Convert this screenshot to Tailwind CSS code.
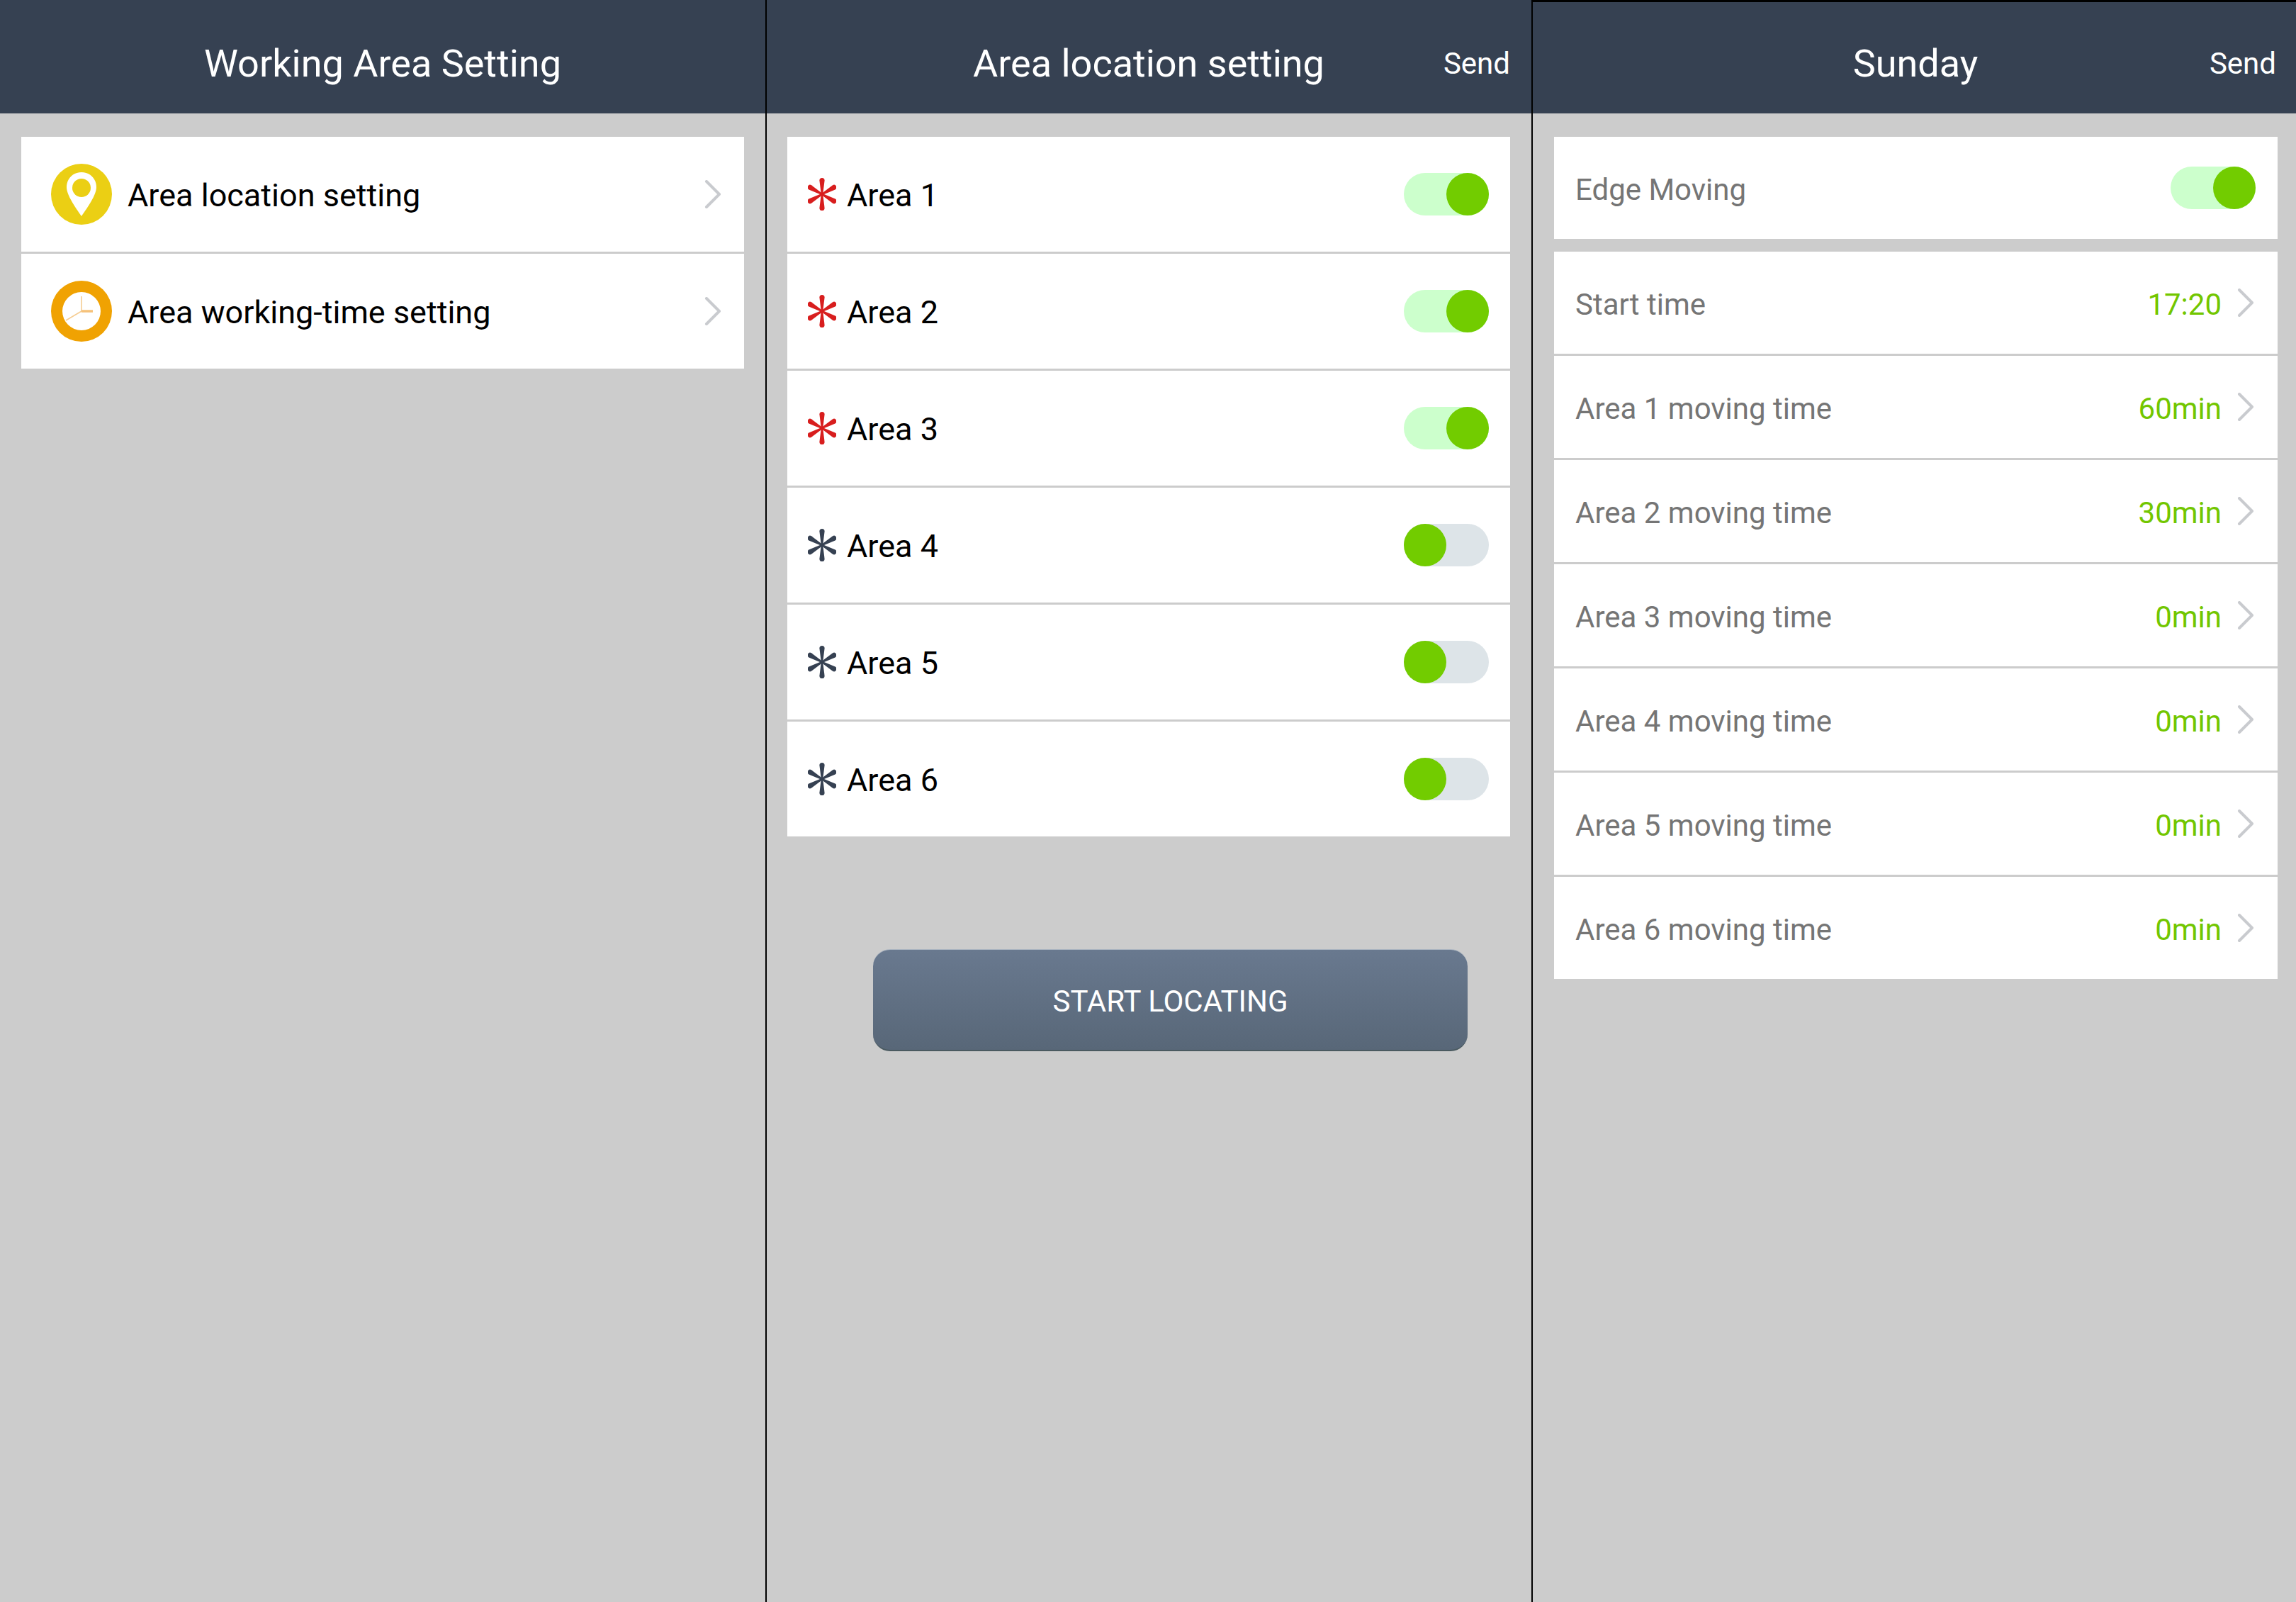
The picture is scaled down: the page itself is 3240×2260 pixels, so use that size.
<!DOCTYPE html>
<html lang="en">
<head>
  <meta charset="UTF-8" />
  <title>Working Area Setting</title>
  <script src="https://cdn.jsdelivr.net/npm/@tailwindcss/browser@4"></script>
</head>
<body class="bg-[#cccccc] font-['Roboto',sans-serif] overflow-hidden">
  <svg class="hidden">
    <symbol id="chev" viewBox="0 0 24 40"><path d="M3 2 L21 20 L3 38" fill="none" stroke="#c9cbcf" stroke-width="4" stroke-linecap="round" stroke-linejoin="round"/></symbol>
    <symbol id="star" viewBox="-20 -24 40 48">
      <g fill="currentColor">
        <path d="M-1.2 0 L-3.6 -19.4 A3.6 3.6 0 0 1 3.6 -19.4 L1.2 0 Z"/>
        <path d="M-1.2 0 L-3.6 -19.4 A3.6 3.6 0 0 1 3.6 -19.4 L1.2 0 Z" transform="rotate(60)"/>
        <path d="M-1.2 0 L-3.6 -19.4 A3.6 3.6 0 0 1 3.6 -19.4 L1.2 0 Z" transform="rotate(120)"/>
        <path d="M-1.2 0 L-3.6 -19.4 A3.6 3.6 0 0 1 3.6 -19.4 L1.2 0 Z" transform="rotate(180)"/>
        <path d="M-1.2 0 L-3.6 -19.4 A3.6 3.6 0 0 1 3.6 -19.4 L1.2 0 Z" transform="rotate(240)"/>
        <path d="M-1.2 0 L-3.6 -19.4 A3.6 3.6 0 0 1 3.6 -19.4 L1.2 0 Z" transform="rotate(300)"/>
      </g>
    </symbol>
  </svg>

  <div class="flex w-[3240px] h-[2260px]">
    <!-- working area -->
    <div class="w-[1080px] shrink-0">
      <div class="h-[160px] bg-[#364152] text-white flex items-center justify-center pt-[20px] text-[54px] leading-none">Working Area Setting</div>
      <div class="mt-[33px] mx-[30px] flex flex-col gap-[3px]">
        <div class="h-[162px] bg-white flex items-center pl-[42px] pr-[32px] text-black text-[45px]">
          <svg class="w-[86px] h-[86px] shrink-0" viewBox="0 0 86 86"><circle cx="43" cy="43" r="43" fill="#ebcf14"/><path d="M43 12 C31 12 22 21 22 33 C22 44 34 61 43 74 C52 61 64 44 64 33 C64 21 55 12 43 12 Z" fill="#fff"/><circle cx="43" cy="34" r="13" fill="#ebcf14"/></svg>
          <span class="ml-[22px] pt-[4px]">Area location setting</span>
          <svg class="w-[24px] h-[40px] ml-auto"><use href="#chev"/></svg>
        </div>
        <div class="h-[162px] bg-white flex items-center pl-[42px] pr-[32px] text-black text-[45px]">
          <svg class="w-[86px] h-[86px] shrink-0" viewBox="0 0 86 86"><circle cx="43" cy="43" r="43" fill="#f0a202"/><circle cx="43" cy="43" r="27" fill="#fff"/><path d="M43 22 V43 M43 43 L21 56" stroke="#f6cd93" stroke-width="1.6" fill="none"/><path d="M43 43 H59" stroke="#f6c27a" stroke-width="3.5"/></svg>
          <span class="ml-[22px] pt-[4px]">Area working-time setting</span>
          <svg class="w-[24px] h-[40px] ml-auto"><use href="#chev"/></svg>
        </div>
      </div>
    </div>
    <div class="w-[2px] shrink-0 bg-black"></div>

    <!-- location -->
    <div class="w-[1079px] shrink-0">
      <div class="h-[160px] bg-[#364152] text-white flex items-center pt-[20px] pl-[29px] pr-[30px] relative">
        <span class="w-[1020px] text-center text-[54px] leading-none">Area location setting</span>
        <span class="absolute right-[30px] top-[69px] text-[42px] leading-none">Send</span>
      </div>
      <div class="mt-[33px] ml-[29px] mr-[30px] flex flex-col gap-[3px] text-black text-[45px]">
        <div class="h-[162px] bg-white flex items-center pl-[29px] pr-[30px]">
          <svg class="w-[40px] h-[48px] text-[#d81e1e]"><use href="#star"/></svg><span class="ml-[15px] pt-[4px]">Area 1</span>
          <div class="ml-auto w-[120px] h-[60px] rounded-full bg-[#ccffcc] flex justify-end"><div class="w-[60px] h-[60px] rounded-full bg-[#72cc00]"></div></div>
        </div>
        <div class="h-[162px] bg-white flex items-center pl-[29px] pr-[30px]">
          <svg class="w-[40px] h-[48px] text-[#d81e1e]"><use href="#star"/></svg><span class="ml-[15px] pt-[4px]">Area 2</span>
          <div class="ml-auto w-[120px] h-[60px] rounded-full bg-[#ccffcc] flex justify-end"><div class="w-[60px] h-[60px] rounded-full bg-[#72cc00]"></div></div>
        </div>
        <div class="h-[162px] bg-white flex items-center pl-[29px] pr-[30px]">
          <svg class="w-[40px] h-[48px] text-[#d81e1e]"><use href="#star"/></svg><span class="ml-[15px] pt-[4px]">Area 3</span>
          <div class="ml-auto w-[120px] h-[60px] rounded-full bg-[#ccffcc] flex justify-end"><div class="w-[60px] h-[60px] rounded-full bg-[#72cc00]"></div></div>
        </div>
        <div class="h-[162px] bg-white flex items-center pl-[29px] pr-[30px]">
          <svg class="w-[40px] h-[48px] text-[#364152]"><use href="#star"/></svg><span class="ml-[15px] pt-[4px]">Area 4</span>
          <div class="ml-auto w-[120px] h-[60px] rounded-full bg-[#dde4e8]"><div class="w-[60px] h-[60px] rounded-full bg-[#72cc00]"></div></div>
        </div>
        <div class="h-[162px] bg-white flex items-center pl-[29px] pr-[30px]">
          <svg class="w-[40px] h-[48px] text-[#364152]"><use href="#star"/></svg><span class="ml-[15px] pt-[4px]">Area 5</span>
          <div class="ml-auto w-[120px] h-[60px] rounded-full bg-[#dde4e8]"><div class="w-[60px] h-[60px] rounded-full bg-[#72cc00]"></div></div>
        </div>
        <div class="h-[162px] bg-white flex items-center pl-[29px] pr-[30px]">
          <svg class="w-[40px] h-[48px] text-[#364152]"><use href="#star"/></svg><span class="ml-[15px] pt-[4px]">Area 6</span>
          <div class="ml-auto w-[120px] h-[60px] rounded-full bg-[#dde4e8]"><div class="w-[60px] h-[60px] rounded-full bg-[#72cc00]"></div></div>
        </div>
      </div>
      <button class="block mt-[159px] ml-[150px] w-[839px] h-[144px] pt-[5px] rounded-[24px] bg-gradient-to-b from-[#69798f] to-[#586778] border-t border-t-[#aab4c0] border-b-2 border-b-[#4a5a60] text-white text-[42px] leading-none">START LOCATING</button>
    </div>
    <div class="w-[2px] shrink-0 bg-black"></div>

    <!-- sunday -->
    <div class="w-[1077px] shrink-0">
      <div class="h-[160px] bg-[#364152] border-t-[3px] border-black text-white flex items-center pt-[17px] pl-[30px] relative">
        <span class="w-[1020px] text-center text-[54px] leading-none">Sunday</span>
        <span class="absolute right-[28px] top-[66px] text-[42px] leading-none">Send</span>
      </div>
      <div class="mt-[33px] ml-[30px] mr-[26px] text-[#757575] text-[42px]">
        <div class="h-[144px] bg-white flex items-center pl-[30px] pr-[31px]">
          <span class="pt-[4px]">Edge Moving</span>
          <div class="ml-auto w-[120px] h-[60px] rounded-full bg-[#ccffcc] flex justify-end"><div class="w-[60px] h-[60px] rounded-full bg-[#72cc00]"></div></div>
        </div>
        <div class="mt-[18px] flex flex-col gap-[3px]">
          <div class="h-[144px] bg-white flex items-center pl-[30px] pr-[33px]"><span class="pt-[4px]">Start time</span><span class="ml-auto pt-[4px] text-[#72c600]">17:20</span><svg class="w-[24px] h-[40px] ml-[22px]"><use href="#chev"/></svg></div>
          <div class="h-[144px] bg-white flex items-center pl-[30px] pr-[33px]"><span class="pt-[4px]">Area 1 moving time</span><span class="ml-auto pt-[4px] text-[#72c600]">60min</span><svg class="w-[24px] h-[40px] ml-[22px]"><use href="#chev"/></svg></div>
          <div class="h-[144px] bg-white flex items-center pl-[30px] pr-[33px]"><span class="pt-[4px]">Area 2 moving time</span><span class="ml-auto pt-[4px] text-[#72c600]">30min</span><svg class="w-[24px] h-[40px] ml-[22px]"><use href="#chev"/></svg></div>
          <div class="h-[144px] bg-white flex items-center pl-[30px] pr-[33px]"><span class="pt-[4px]">Area 3 moving time</span><span class="ml-auto pt-[4px] text-[#72c600]">0min</span><svg class="w-[24px] h-[40px] ml-[22px]"><use href="#chev"/></svg></div>
          <div class="h-[144px] bg-white flex items-center pl-[30px] pr-[33px]"><span class="pt-[4px]">Area 4 moving time</span><span class="ml-auto pt-[4px] text-[#72c600]">0min</span><svg class="w-[24px] h-[40px] ml-[22px]"><use href="#chev"/></svg></div>
          <div class="h-[144px] bg-white flex items-center pl-[30px] pr-[33px]"><span class="pt-[4px]">Area 5 moving time</span><span class="ml-auto pt-[4px] text-[#72c600]">0min</span><svg class="w-[24px] h-[40px] ml-[22px]"><use href="#chev"/></svg></div>
          <div class="h-[144px] bg-white flex items-center pl-[30px] pr-[33px]"><span class="pt-[4px]">Area 6 moving time</span><span class="ml-auto pt-[4px] text-[#72c600]">0min</span><svg class="w-[24px] h-[40px] ml-[22px]"><use href="#chev"/></svg></div>
        </div>
      </div>
    </div>
  </div>
</body>
</html>
